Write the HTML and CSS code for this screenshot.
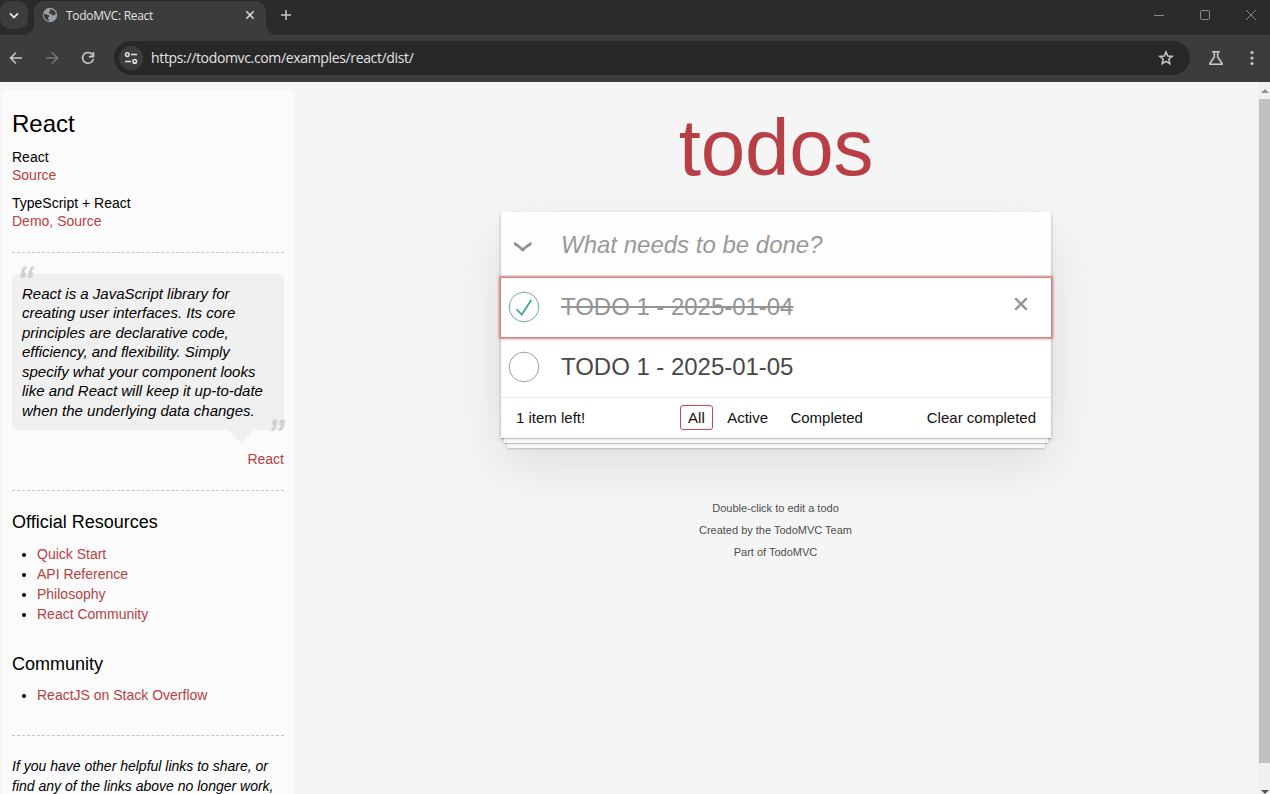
FILE: index.html
```html
<!DOCTYPE html>
<html lang="en">
<head>
<meta charset="utf-8">
<title>TodoMVC: React</title>
<link rel="stylesheet" href="styles.css">
</head>
<body>
<div class="window">
  <header class="tabstrip">
    <div class="tabsearch"><svg width="28" height="28" viewBox="0 0 28 28"><path d="M10 12.3l4 4 4-4" fill="none" stroke="#e3e3e3" stroke-width="1.9"/></svg></div>
    <div class="tab">
      <svg class="globe" width="16" height="16" viewBox="0 0 16 16"><circle cx="8" cy="8" r="7.2" fill="#9aa0a6"/><path d="M1.8 6.2C3.8 8.2 6.5 7 7.2 8.6c.6 1.5-1.4 1.3-1.2 2.7.1 1.2 1.2 1.1 1.4 2.5C4 13.7 1.4 10.500 1.8 6.200zM7.800 2.200c-.6 1.300 1 1.400.5 2.300-.4.8-1.500.3-1.600 1.300 0 1.200 1.800.5 2.700 1.200.8.6.6 1.400 1.700 1.500 1.200.1 1.500-1.200 2.700-1.200-.1-2.900-2.700-5.200-6-5.100z" fill="#3c3c3c"/></svg>
      <span class="tab-title">TodoMVC: React</span>
      <svg class="tab-close" width="10" height="10" viewBox="0 0 10 10"><path d="M1.300 1.300l7.400 7.400M8.700 1.300L1.300 8.700" stroke="#dedede" stroke-width="1.500"/></svg>
    </div>
    <svg class="newtab" width="12" height="12" viewBox="0 0 12 12"><path d="M6 1v10M1 6h10" stroke="#c7c7c7" stroke-width="1.500"/></svg>
    <div class="controls">
      <svg width="12" height="12" viewBox="0 0 12 12"><path d="M1 6.500h10" stroke="#8a8a8a"/></svg>
      <svg width="12" height="12" viewBox="0 0 12 12"><rect x="1.500" y="1.500" width="9" height="9" rx="1" fill="none" stroke="#8a8a8a"/></svg>
      <svg width="12" height="12" viewBox="0 0 12 12"><path d="M1 1l10 10M11 1L1 11" stroke="#8a8a8a"/></svg>
    </div>
  </header>
  <div class="toolbar">
    <svg class="nav" width="16" height="16" viewBox="0 0 16 16"><path d="M14 8H3M8 2.500L2.500 8 8 13.500" fill="none" stroke="#c7c7c7" stroke-width="1.600"/></svg>
    <svg class="nav" width="16" height="16" viewBox="0 0 16 16"><path d="M2 8h11M8 2.500L13.500 8 8 13.500" fill="none" stroke="#757575" stroke-width="1.600"/></svg>
    <svg class="nav" width="16" height="16" viewBox="0 0 16 16"><path d="M13.300 8.800A5.400 5.400 0 1 1 12.200 4.500L13.600 6" fill="none" stroke="#c7c7c7" stroke-width="1.600"/><path d="M13.400 2v4.600H8.800" fill="none" stroke="#c7c7c7" stroke-width="1.600"/></svg>
    <div class="omnibox">
      <span class="site"><svg width="24" height="24" viewBox="0 0 24 24" fill="none" stroke="#e3e3e3" stroke-width="1.500"><circle cx="8.300" cy="8.600" r="1.800"/><path d="M12 8.600h6M6 15.400h6"/><circle cx="15.700" cy="15.400" r="1.800"/></svg></span>
      <span class="url">https://todomvc.com/examples/react/dist/</span>
      <svg class="star" width="16" height="16" viewBox="0 0 16 16"><path d="M8 1.900l1.750 4.100 4.450.4-3.400 2.900 1.050 4.400L8 11.350 4.150 13.700l1.050-4.400-3.400-2.900L6.250 6z" fill="none" stroke="#c7c7c7" stroke-width="1.500"/></svg>
    </div>
    <svg class="flask" width="16" height="16" viewBox="0 0 16 16"><path d="M4 1.700h8M6.300 2v5L1.900 13.500q-.4.800.5.800h11.200q.9 0 .5-.8L9.700 7V2" fill="none" stroke="#c7c7c7" stroke-width="1.600"/></svg>
    <svg class="dots" width="16" height="16" viewBox="0 0 16 16" fill="#c7c7c7"><circle cx="8" cy="2.500" r="1.600"/><circle cx="8" cy="8" r="1.600"/><circle cx="8" cy="13.500" r="1.600"/></svg>
  </div>
  <div class="page">
    <aside class="learn">
      <h3>React</h3>
      <h5>React</h5>
      <p class="links"><a>Source</a></p>
      <h5>TypeScript + React</h5>
      <p class="links"><a>Demo</a><a>, </a><a>Source</a></p>
      <hr class="rule">
      <blockquote class="quote">
        <p>React is a JavaScript library for<br>creating user interfaces. Its core<br>principles are declarative code,<br>efficiency, and flexibility. Simply<br>specify what your component looks<br>like and React will keep it up-to-date<br>when the underlying data changes.</p>
        <span class="mark open">“</span>
        <span class="mark close">”</span>
      </blockquote>
      <p class="source"><a>React</a></p>
      <hr class="rule">
      <h4>Official Resources</h4>
      <ul><li><a>Quick Start</a></li><li><a>API Reference</a></li><li><a>Philosophy</a></li><li><a>React Community</a></li></ul>
      <h4 class="second">Community</h4>
      <ul><li><a>ReactJS on Stack Overflow</a></li></ul>
      <hr class="rule last">
      <p class="note">If you have other helpful links to share, or<br>find any of the links above no longer work,</p>
    </aside>
    <main class="main">
      <h1>todos</h1>
      <section class="todoapp">
        <div class="entry">
          <svg class="toggle-all" width="20" height="14" viewBox="0 0 20 14"><path d="M1 1.700Q6 4 9.700 8Q13.500 4 18.500 1.700V5Q13.500 7.500 10.300 11.500H9.100Q6 7.500 1 5z" fill="#919191"/></svg>
          <span class="placeholder">What needs to be done?</span>
        </div>
        <div class="todo done focused">
          <svg class="check" width="32" height="32" viewBox="-4 -4 108 108"><circle cx="50" cy="50" r="50" fill="none" stroke="#59A193" stroke-width="3"/><path fill="#3EA390" d="M72 25L42 71 27 56l-4 4 20 20 34-52z"/></svg>
          <span class="label">TODO 1 - 2025-01-04</span>
          <svg class="destroy" width="14" height="14" viewBox="0 0 14 14"><path d="M1.300 1.300l11.400 11.400M12.700 1.300L1.300 12.700" stroke="#949494" stroke-width="2.500"/></svg>
        </div>
        <div class="todo">
          <svg class="check" width="32" height="32" viewBox="-4 -4 108 108"><circle cx="50" cy="50" r="50" fill="none" stroke="#949494" stroke-width="3"/></svg>
          <span class="label">TODO 1 - 2025-01-05</span>
        </div>
        <footer class="footer">
          <span class="count">1 item left!</span>
          <nav class="filters"><a class="selected">All</a><a>Active</a><a>Completed</a></nav>
          <span class="clear">Clear completed</span>
        </footer>
      </section>
      <div class="info"><p>Double-click to edit a todo</p><p>Created by the TodoMVC Team</p><p>Part of TodoMVC</p></div>
    </main>
    <div class="scrollbar">
      <svg width="11" height="17" viewBox="0 0 11 17"><path d="M2 11l4-4 4 4z" fill="#8f8f8f"/></svg>
      <div class="thumb"></div>
      <svg class="down" width="11" height="4" viewBox="0 0 11 4"><path d="M2 0h8L6 4z" fill="#505050"/></svg>
    </div>
  </div>
</div>
</body>
</html>
```
FILE: styles.css
```css
* { box-sizing: border-box; }
body, h1, h3, h4, h5, p, ul, blockquote { margin: 0; padding: 0; font-weight: 400; }
body { overflow: hidden; font: 14px/20px "Liberation Sans", Arial, sans-serif; color: #111; background: #f5f5f5; }
svg { display: block; flex: none; }
.window { width: 1270px; height: 794px; display: flex; flex-direction: column; overflow: hidden; }

.tabstrip { height: 35px; background: #2b2b2b; display: flex; align-items: flex-start; font: 12px/16px "Open Sans", "Noto Sans", sans-serif; }
.tabsearch { width: 28px; height: 28px; margin-top: 1px; background: #3c3c3c; border-radius: 10px; }
.tab { position: relative; width: 232px; height: 34px; margin: 1px 0 0 6px; padding: 0 11px 6px 8px; border-radius: 10px 10px 0 0; background: #3c3c3c; display: flex; align-items: center; color: #e3e3e3; }
.tab::before, .tab::after { content: ""; position: absolute; bottom: 0; width: 10px; height: 10px; }
.tab::before { left: -10px; background: radial-gradient(circle at 0 0, transparent 9.500px, #3c3c3c 10px); }
.tab::after { right: -10px; background: radial-gradient(circle at 100% 0, transparent 9.500px, #3c3c3c 10px); }
.tab-title { margin-left: 8px; padding-top: 2px; white-space: nowrap; letter-spacing: -0.28px; }
.tab-close { margin-left: auto; }
.newtab { margin: 9px 0 0 14px; }
.controls { margin: 9px 13px 0 auto; display: flex; gap: 34px; }

.toolbar { height: 47px; background: #3c3c3c; display: flex; align-items: center; padding: 0 0 1px 8px; }
.nav { margin-right: 20px; }
.omnibox { width: 1076px; height: 34px; margin-left: -2px; border-radius: 17px; background: #282828; display: flex; align-items: center; padding: 0 16px 0 5px; }
.site { width: 24px; height: 24px; border-radius: 50%; background: #3c3c3c; }
.url { margin-left: 8px; font: 14px/20px "Open Sans", "Noto Sans", sans-serif; color: #e3e3e3; letter-spacing: -0.350px; white-space: nowrap; }
.star { margin-left: auto; }
.flask { margin-left: 18px; }
.dots { margin-left: 20px; }

.page { flex: 1; min-height: 0; display: flex; align-items: flex-start; background: #f5f5f5; }
.learn { width: 292px; height: 760px; flex: none; margin: 8px 0 0 2px; padding: 20px 10px; border-radius: 5px; background: #fbfbfb; color: #000; }
a { color: #b83f45; }
h3 { font-size: 24px; line-height: 28px; margin-bottom: 10px; }
h5 { font-size: 14px; line-height: 18px; }
.links { line-height: 18px; margin-bottom: 10px; }
.rule { height: 0; margin: 0; border: 0; border-top: 1px dashed #c5c5c5; }
.links + .rule { margin-top: 22px; }
.quote { position: relative; margin-top: 21px; height: 156px; padding: 10px; border-radius: 5px; background: #f0f0f0; font-style: italic; font-size: 15px; line-height: 19.500px; white-space: nowrap; }
.quote p { margin-top: -0.400px; }
.quote::after { content: ""; position: absolute; top: 156px; right: 30px; border: 13px solid transparent; border-top-color: #f0f0f0; border-bottom: 0; }
.mark { position: absolute; font-size: 46px; line-height: 20px; height: 20px; color: #d0d0d0; -webkit-text-stroke: 0.4px #d0d0d0; }
.open { left: 5px; top: -1px; }
.close { right: 1px; top: 152px; }
.source { text-align: right; line-height: 20px; margin: 19px 0 21px; }
h4 { font-size: 18px; line-height: 24px; margin: 19px 0 10px; }
h4.second { margin: 28px 0 9px; }
.learn ul { padding-left: 25px; }
.last { margin-top: 30px; }
.note { margin-top: 20px; font-style: italic; white-space: nowrap; }

.main { width: 550px; margin-left: 207px; flex: none; }
h1 { height: 130px; padding-top: 21px; font-size: 80px; line-height: 90px; text-align: center; color: #b83f45; letter-spacing: -0.200px; }
.todoapp { height: 226px; background: #fff; box-shadow: 0 1px 1px rgba(0,0,0,.2), 0 8px 0 -3px #f6f6f6, 0 9px 1px -3px rgba(0,0,0,.2), 0 16px 0 -6px #f6f6f6, 0 17px 2px -6px rgba(0,0,0,.2), 0 2px 4px rgba(0,0,0,.2), 0 25px 50px rgba(0,0,0,.1); }
.todoapp { display: flex; flex-direction: column; }
.entry { height: 66px; display: flex; align-items: center; padding-left: 12px; background: #fefefe; }
.toggle-all { margin-top: 3px; }
.placeholder { margin-left: 28px; font-size: 24px; font-style: italic; color: #999; }
.todo { height: 59px; display: flex; align-items: center; padding: 0 0 2px 7px; }
.todo + .todo { margin-top: 1px; }
.focused { position: relative; box-shadow: 0 0 2px 2px #cf7d7d; }
.label { margin-left: 21px; font-size: 24px; color: #484848; letter-spacing: -0.030px; }
.done .label { color: #949494; text-decoration: line-through; }
.destroy { margin: 0 23px 6px auto; }
.footer { height: 41px; padding: 0 15px; border-top: 1px solid #e6e6e6; display: grid; grid-template-columns: 1fr auto 1fr; align-items: center; font-size: 15px; }
.filters { display: flex; gap: 6.400px; margin: 0 1px 1px 0; }
.filters a { padding: 0 7px; line-height: 23px; border: 1px solid transparent; border-radius: 3px; color: #111; }
.filters .selected { border-color: #ce4646; }
.clear { text-align: right; }
.info { margin: 59px 1px 0 0; text-align: center; font-size: 11px; line-height: 22px; color: #4d4d4d; }
.scrollbar { align-self: stretch; width: 12px; margin-left: auto; padding-left: 1px; background: #f0f0f0; display: flex; flex-direction: column; }
.thumb { width: 11px; height: 664px; background: #c1c1c1; }
.down { margin-top: auto; }
```
